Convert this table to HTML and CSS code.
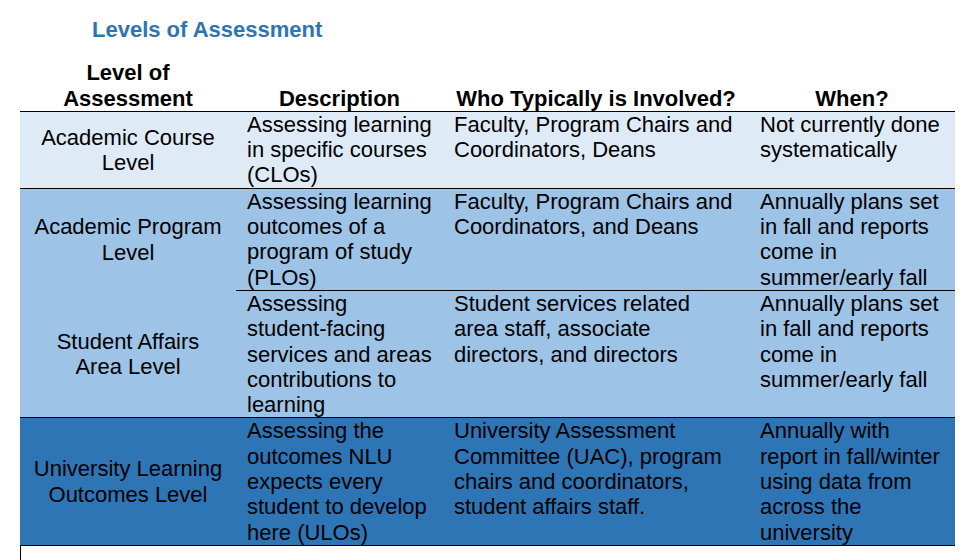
FILE: index.html
```html
<!DOCTYPE html>
<html>
<head>
<meta charset="utf-8">
<link rel="stylesheet" href="styles.css">
</head>
<body>
<h1 class="title">Levels of Assessment</h1>
<table class="levels">
  <colgroup>
    <col class="c1"><col class="c2"><col class="c3"><col class="c4">
  </colgroup>
  <thead>
    <tr>
      <th>Level of Assessment</th>
      <th>Description</th>
      <th>Who Typically is Involved?</th>
      <th>When?</th>
    </tr>
  </thead>
  <tbody>
    <tr class="light">
      <td class="lvl">Academic Course Level</td>
      <td>Assessing learning in specific courses (CLOs)</td>
      <td class="who">Faculty, Program Chairs and Coordinators, Deans</td>
      <td>Not currently done systematically</td>
    </tr>
    <tr class="mid">
      <td class="lvl open">Academic Program Level</td>
      <td>Assessing learning outcomes of a program of study (PLOs)</td>
      <td class="who">Faculty, Program Chairs and Coordinators, and Deans</td>
      <td>Annually plans set in fall and reports come in summer/early fall</td>
    </tr>
    <tr class="mid">
      <td class="lvl">Student Affairs Area Level</td>
      <td>Assessing <span class="nobr">student-facing</span> services and areas contributions to learning</td>
      <td class="who">Student services related area staff, associate directors, and directors</td>
      <td>Annually plans set in fall and reports come in summer/early fall</td>
    </tr>
    <tr class="dark">
      <td class="lvl">University Learning Outcomes Level</td>
      <td>Assessing the outcomes NLU expects every student to develop here (ULOs)</td>
      <td class="who">University Assessment Committee (UAC), program chairs and coordinators, student affairs staff.</td>
      <td>Annually with report in fall/winter using data from across the university</td>
    </tr>
  </tbody>
</table>
<div class="next-edge"></div>
</body>
</html>
```
FILE: styles.css
```css
html, body {
  margin: 0;
  padding: 0;
  background: #ffffff;
}
body {
  font-family: "Liberation Sans", Arial, sans-serif;
  color: #000;
  font-size: 22px;
  line-height: 25.3px;
}
.title {
  margin: 0 0 0 92px;
  padding-top: 17px;
  font-size: 22px;
  line-height: 25.3px;
  font-weight: bold;
  color: #2E74B5;
}
.levels {
  margin: 18px 0 0 20px;
  width: 935px;
  table-layout: fixed;
  border-collapse: collapse;
  border-spacing: 0;
}
.c1 { width: 216px; }
.c2 { width: 207px; }
.c3 { width: 306px; }
.c4 { width: 206px; }
.levels th {
  font-weight: bold;
  text-align: center;
  vertical-align: bottom;
  padding: 0 8px;
  border-bottom: 1px solid #000;
}
.levels td {
  padding: 0 7px 0 11px;
  vertical-align: top;
  text-align: left;
  border-bottom: 1px solid #000;
}
.levels td.who {
  padding-right: 10px;
}
.levels td.lvl {
  text-align: center;
  vertical-align: middle;
  padding: 0 11px;
}
.levels td.open {
  border-bottom: none;
}
.nobr { white-space: nowrap; }
.light td { background: #DEEBF7; }
.mid td { background: #9DC3E6; }
.dark td { background: #2E75B6; }
.next-edge {
  margin-left: 20px;
  height: 20px;
  border-left: 1px solid #000;
}
```
